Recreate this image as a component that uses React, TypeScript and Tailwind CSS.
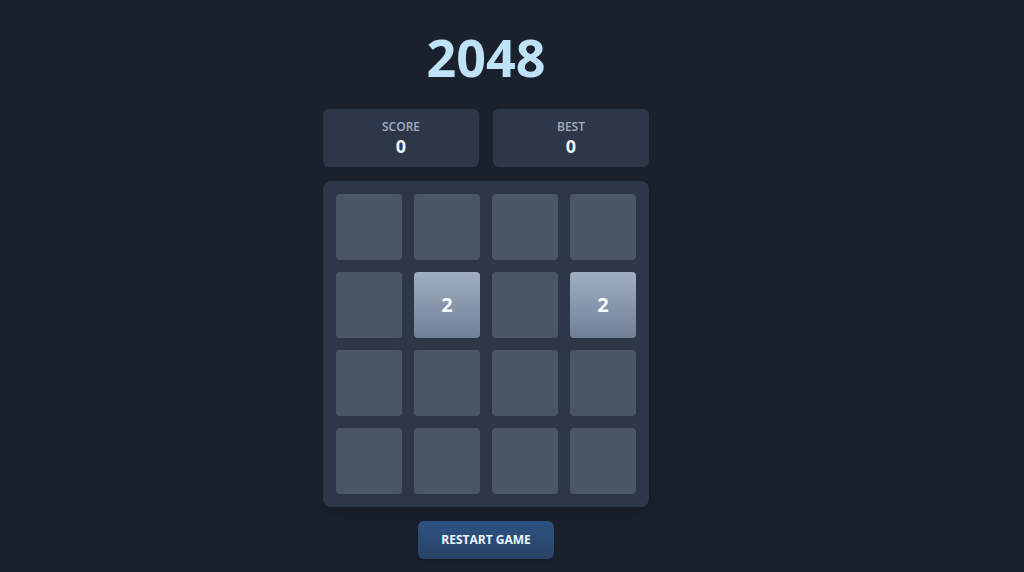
import React from "react";

const board: (number | null)[] = [
  null, null, null, null,
  null, 2, null, 2,
  null, null, null, null,
  null, null, null, null,
];

export default function App() {
  return (
    <div
      className="min-h-[572px] w-full bg-[#1a202c] flex flex-col items-center pt-[31px] pr-[52px]"
      style={{ fontFamily: '"Open Sans", "Noto Sans", sans-serif' }}
    >
      <h1 className="text-[52px] leading-[52px] font-bold text-[#bee3f8]">2048</h1>
      <div className="mt-[26px] flex gap-[14px]">
        {[
          ["SCORE", "0"],
          ["BEST", "0"],
        ].map(([label, value]) => (
          <div
            key={label}
            className="w-[156px] h-[58px] rounded-md bg-[#2d3748] flex flex-col items-center pt-[10px]"
          >
            <div className="text-[12px] leading-[16px] font-semibold text-[#a0aec0]">{label}</div>
            <div className="text-[18px] leading-[22px] font-bold text-[#edf2f7]">{value}</div>
          </div>
        ))}
      </div>
      <div className="mt-[14px] w-[326px] h-[326px] rounded-lg bg-[#2d3748] p-[13px] grid grid-cols-4 gap-[12px] shadow-lg">
        {board.map((v, i) =>
          v ? (
            <div
              key={i}
              className="w-[66px] h-[66px] rounded bg-gradient-to-b from-[#a0aec0] to-[#718096] flex items-center justify-center text-[20px] font-bold text-[#f7fafc]"
            >
              {v}
            </div>
          ) : (
            <div key={i} className="w-[66px] h-[66px] rounded bg-[#4a5568]" />
          )
        )}
      </div>
      <button className="mt-[14px] w-[136px] h-[38px] rounded-md bg-gradient-to-b from-[#2c5282] to-[#2a4365] text-[12px] font-bold text-[#ebf8ff] flex items-center justify-center shadow">
        RESTART GAME
      </button>
    </div>
  );
}
